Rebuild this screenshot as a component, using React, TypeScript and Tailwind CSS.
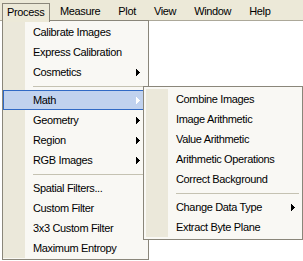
import React from 'react';

type Row = { label: string; sub?: boolean; active?: boolean } | 'sep';

const processRows: Row[] = [
  { label: 'Calibrate Images' },
  { label: 'Express Calibration' },
  { label: 'Cosmetics', sub: true },
  'sep',
  { label: 'Math', sub: true, active: true },
  { label: 'Geometry', sub: true },
  { label: 'Region', sub: true },
  { label: 'RGB Images', sub: true },
  'sep',
  { label: 'Spatial Filters...' },
  { label: 'Custom Filter' },
  { label: '3x3 Custom Filter' },
  { label: 'Maximum Entropy' },
];

const mathRows: Row[] = [
  { label: 'Combine Images' },
  { label: 'Image Arithmetic' },
  { label: 'Value Arithmetic' },
  { label: 'Arithmetic Operations' },
  { label: 'Correct Background' },
  'sep',
  { label: 'Change Data Type', sub: true },
  { label: 'Extract Byte Plane' },
];

const Arrow: React.FC<{ color: string }> = ({ color }) => (
  <svg width="4" height="7" viewBox="0 0 4 7" className="block">
    <path d="M0 0h1v1h1v1h1v1h1v1h-1v1h-1v1h-1v1h-1z" fill={color} />
  </svg>
);

const MenuRows: React.FC<{ rows: Row[]; arrowRight: string }> = ({ rows, arrowRight }) => (
  <>
    {rows.map((r, i) =>
      r === 'sep' ? (
        <div key={i} className="flex h-[8px]">
          <div className="w-[22px] shrink-0 bg-[#ebe8da]" />
          <div className="ml-[8px] mr-[1px] mt-[4px] h-px flex-1 bg-[#c5c2b2]" />
        </div>
      ) : (
        <div key={i} className="relative flex h-[20px] items-center">
          {r.active && <div className="absolute inset-0 border border-[#316ac5] bg-[#c1d2ee]" />}
          <div className={`relative h-full w-[22px] shrink-0 ${r.active ? '' : 'bg-[#ebe8da]'}`} />
          <span className="relative pl-[8px] leading-[20px] whitespace-nowrap">{r.label}</span>
          {r.sub && (
            <div className={`absolute top-[7px] ${arrowRight}`}>
              <Arrow color={r.active ? '#ffffff' : '#000000'} />
            </div>
          )}
        </div>
      )
    )}
  </>
);

export default function App() {
  return (
    <div className="relative h-[261px] w-[303px] overflow-hidden bg-white text-[11px] tracking-[-0.35px] text-black font-['Liberation_Sans',Arial,sans-serif]">
      {/* menu bar */}
      <div className="flex h-[21px] items-start border-b border-[#aca899] bg-[#ece9d8]">
        <div className="relative z-20 ml-[2px] mt-[3px] h-[19px] w-[48px] border-x border-t border-[#8a867a] bg-[#ece9d8] pl-[4px] leading-[16px]">
          Process
        </div>
        <div className="ml-[10px] mt-[3px] flex gap-[18px] leading-[16px]">
          {['Measure', 'Plot', 'View', 'Window', 'Help'].map(m => (
            <span key={m}>{m}</span>
          ))}
        </div>
      </div>

      {/* Process dropdown */}
      <div className="absolute left-[2px] top-[20px] z-10 w-[147px] border border-[#8a867a] bg-[#f9f8f4] py-[1px]">
        <MenuRows rows={processRows} arrowRight="right-[8px]" />
      </div>

      {/* Math submenu */}
      <div className="absolute left-[143px] top-[86px] z-30 w-[160px] border border-[#8a867a] bg-[#f9f8f4] p-[2px]">
        <MenuRows rows={mathRows} arrowRight="right-[5px]" />
      </div>
    </div>
  );
}
